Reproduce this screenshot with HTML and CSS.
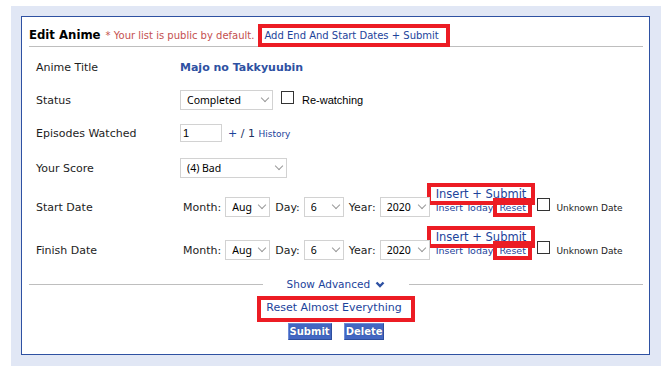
FILE: index.html
```html
<!DOCTYPE html>
<html>

<head>
    <title>Edit Anime</title>
    <link rel="stylesheet" href="styles.css">
</head>

<body>
    <div class="panel">
        <div class="edit-box">
            <h2 class="edit-head">Edit Anime <span class="note">* Your list is public by default.</span><a href="#" class="marked head-link">Add End And Start Dates + Submit</a></h2>

            <table class="edit-table">
                <tr class="row-title">
                    <td class="label">Anime Title</td>
                    <td class="value"><strong class="anime-name">Majo no Takkyuubin</strong></td>
                </tr>
                <tr class="row-status">
                    <td class="label">Status</td>
                    <td class="value"><span class="sel"><select class="w-status">
                                <option>Watching</option>
                                <option selected>Completed</option>
                                <option>On-Hold</option>
                                <option>Dropped</option>
                                <option>Plan to Watch</option>
                            </select></span><input type="checkbox" class="check" id="rewatch"><label for="rewatch" class="check-text">Re-watching</label></td>
                </tr>
                <tr class="row-eps">
                    <td class="label">Episodes Watched</td>
                    <td class="value"><input type="text" class="eps" value="1"><a href="#" class="plus">+</a> <span class="total">/ 1</span> <a href="#" class="small-link">History</a></td>
                </tr>
                <tr class="row-score">
                    <td class="label">Your Score</td>
                    <td class="value"><span class="sel"><select class="w-score">
                                <option>Select score</option>
                                <option>(5) Average</option>
                                <option selected>(4) Bad</option>
                                <option>(3) Very Bad</option>
                            </select></span></td>
                </tr>
                <tr class="row-start">
                    <td class="label">Start Date</td>
                    <td class="value"><span class="date-label">Month:</span><span class="sel"><select class="w-month">
                                <option>Jul</option>
                                <option selected>Aug</option>
                                <option>Sep</option>
                            </select></span><span class="date-label">Day:</span><span class="sel"><select class="w-day">
                                <option>5</option>
                                <option selected>6</option>
                                <option>7</option>
                            </select></span><span class="date-label">Year:</span><span class="sel"><select class="w-year">
                                <option selected>2020</option>
                                <option>2019</option>
                            </select></span><span class="quick"><a href="#" class="marked quick-submit">Insert + Submit</a><span class="quick-row"><a href="#" class="small-link">Insert Today</a><a href="#" class="marked small-link reset">Reset</a></span></span><input type="checkbox" class="check date-check"><span class="small-text">Unknown Date</span></td>
                </tr>
                <tr class="row-finish">
                    <td class="label">Finish Date</td>
                    <td class="value"><span class="date-label">Month:</span><span class="sel"><select class="w-month">
                                <option>Jul</option>
                                <option selected>Aug</option>
                                <option>Sep</option>
                            </select></span><span class="date-label">Day:</span><span class="sel"><select class="w-day">
                                <option>5</option>
                                <option selected>6</option>
                                <option>7</option>
                            </select></span><span class="date-label">Year:</span><span class="sel"><select class="w-year">
                                <option selected>2020</option>
                                <option>2019</option>
                            </select></span><span class="quick"><a href="#" class="marked quick-submit">Insert + Submit</a><span class="quick-row"><a href="#" class="small-link">Insert Today</a><a href="#" class="marked small-link reset">Reset</a></span></span><input type="checkbox" class="check date-check"><span class="small-text">Unknown Date</span></td>
                </tr>
            </table>

            <div class="advanced">
                <a href="#" class="advanced-link">Show Advanced
                    <svg class="chevron" width="10" height="7" viewBox="0 0 10 7">
                        <polyline points="1.5,1.5 5,5 8.5,1.5" fill="none" stroke="#2e51a2" stroke-width="2.4" />
                    </svg>
                </a>
            </div>

            <div class="reset-all">
                <a href="#" class="marked reset-all-link">Reset Almost Everything</a>
            </div>

            <div class="actions">
                <button class="btn">Submit</button>
                <button class="btn">Delete</button>
            </div>
        </div>
    </div>
</body>

</html>
```

FILE: styles.css
```css
body {
    margin: 0;
    background: #fff;
    font-family: "DejaVu Sans", Verdana, sans-serif;
    font-size: 11px;
    color: #1d1d1d;
}

a {
    color: #1c439b;
    text-decoration: none;
}

/* red highlight boxes */
.marked {
    outline: 4px solid #ec1c24;
}

.panel {
    margin: 6px 8px 2px 11px;
    padding: 10px 11px 11px 10px;
    background: #e1e7f5;
}

.edit-box {
    background: #fff;
    border: 1px solid #2e51a2;
    padding: 0 6px 14px 7px;
}

.edit-head {
    margin: 0;
    padding: 9px 0 2px;
    border-bottom: 1px solid #bebebe;
    font: bold 13px/18px "DejaVu Sans Condensed", "DejaVu Sans", sans-serif;
    color: #000;
    white-space: nowrap;
}

.note {
    font: normal 10px "DejaVu Sans", sans-serif;
    color: #c4504f;
    margin-left: 1px;
}

.head-link {
    font: normal 10px "DejaVu Sans", sans-serif;
    padding: 2px 7px 2px 2px;
    margin-left: 8px;
}

.edit-table {
    width: 100%;
    border-collapse: collapse;
}

.edit-table td {
    vertical-align: baseline;
    padding: 0;
    line-height: 14px;
    white-space: nowrap;
}

.edit-table .label {
    width: 144px;
    padding-left: 7px;
}

.row-title td { padding-top: 14px; }
.row-status td { padding-top: 15px; }
.row-eps td { padding-top: 14px; }
.row-score td { padding-top: 16px; }
.row-start td { padding-top: 9px; }
.row-finish td { padding-top: 13px; }

.anime-name {
    color: #2e51a2;
}

/* selects */
.sel {
    position: relative;
    display: inline-block;
}

.sel::after {
    content: "";
    position: absolute;
    right: 5px;
    top: 5px;
    width: 5px;
    height: 5px;
    border-right: 1px solid #9a9a9a;
    border-bottom: 1px solid #9a9a9a;
    transform: rotate(45deg);
    pointer-events: none;
}

.sel select {
    appearance: none;
    -webkit-appearance: none;
    box-sizing: border-box;
    height: 20px;
    margin: 0;
    padding: 0 0 0 6px;
    border: 1px solid #d2d2d2;
    border-radius: 0;
    background: #fff;
    font: 10.5px "Noto Sans", sans-serif;
    color: #000;
}

.w-status { width: 93px; }
.w-score { width: 107px; }
.w-month { width: 45px; }
.w-day { width: 40px; }
.w-year { width: 50px; }

.check {
    appearance: none;
    -webkit-appearance: none;
    width: 13px;
    height: 13px;
    margin: 0 8px;
    border: 1px solid #333;
    border-radius: 0;
    background: #fff;
    box-sizing: border-box;
}

.check-text {
    font: 11px "Liberation Sans", Arial, sans-serif;
    color: #000;
}

.eps {
    box-sizing: border-box;
    width: 42px;
    height: 18px;
    margin: 0;
    padding: 0 2px;
    border: 1px solid #d2d2d2;
    font: 11px "Liberation Sans", Arial, sans-serif;
    color: #000;
}

.plus {
    margin-left: 6px;
}

.total {
    color: #22305e;
}

.small-link {
    font-size: 9px;
}

.small-text {
    font-size: 9px;
    color: #222;
    margin-left: -1px;
}

/* date rows */
.date-label {
    margin: 0 4px 0 0;
}

.value .date-label:first-child {
    margin-left: 3px;
}

.date-label + .sel {
    margin-right: 5px;
}

.quick {
    display: inline-block;
    line-height: 14px;
    margin-left: -4px;
}

.quick-submit {
    display: block;
    font-size: 11.5px;
    padding: 0 5px;
}

.quick-row {
    display: block;
    font-size: 9.5px;
    padding-left: 5px;
}

.quick-row .small-link {
    font-size: 9.5px;
}

.reset {
    padding: 0 2px;
    margin-left: 4px;
}

.date-check {
    margin: 0 7px 0 6px;
}

/* advanced + actions */
.advanced {
    display: flex;
    align-items: center;
    margin-top: 17px;
    line-height: 14px;
}

.advanced::before,
.advanced::after {
    content: "";
    flex: 1;
    border-top: 1px solid #bebebe;
}

.advanced-link {
    font-size: 10.5px;
    padding: 0 24px;
}

.chevron {
    margin-left: 2px;
    vertical-align: 0;
}

.reset-all {
    display: flex;
    justify-content: center;
    margin-top: 9px;
}

.reset-all-link {
    display: inline-block;
    font-size: 11px;
    line-height: 14px;
    padding: 1px 9px 3px 5px;
}

.actions {
    display: flex;
    justify-content: center;
    gap: 12px;
    margin-top: 5px;
}

.btn {
    height: 17px;
    margin: 0;
    padding: 0 1px;
    border: 1px solid;
    border-color: #6f8cd6 #2d4e9e #2d4e9e #6f8cd6;
    background: #4367c2;
    color: #fff;
    font: bold 10px "DejaVu Sans", sans-serif;
    text-shadow: 0 0 1px #1c3a80;
}
```
